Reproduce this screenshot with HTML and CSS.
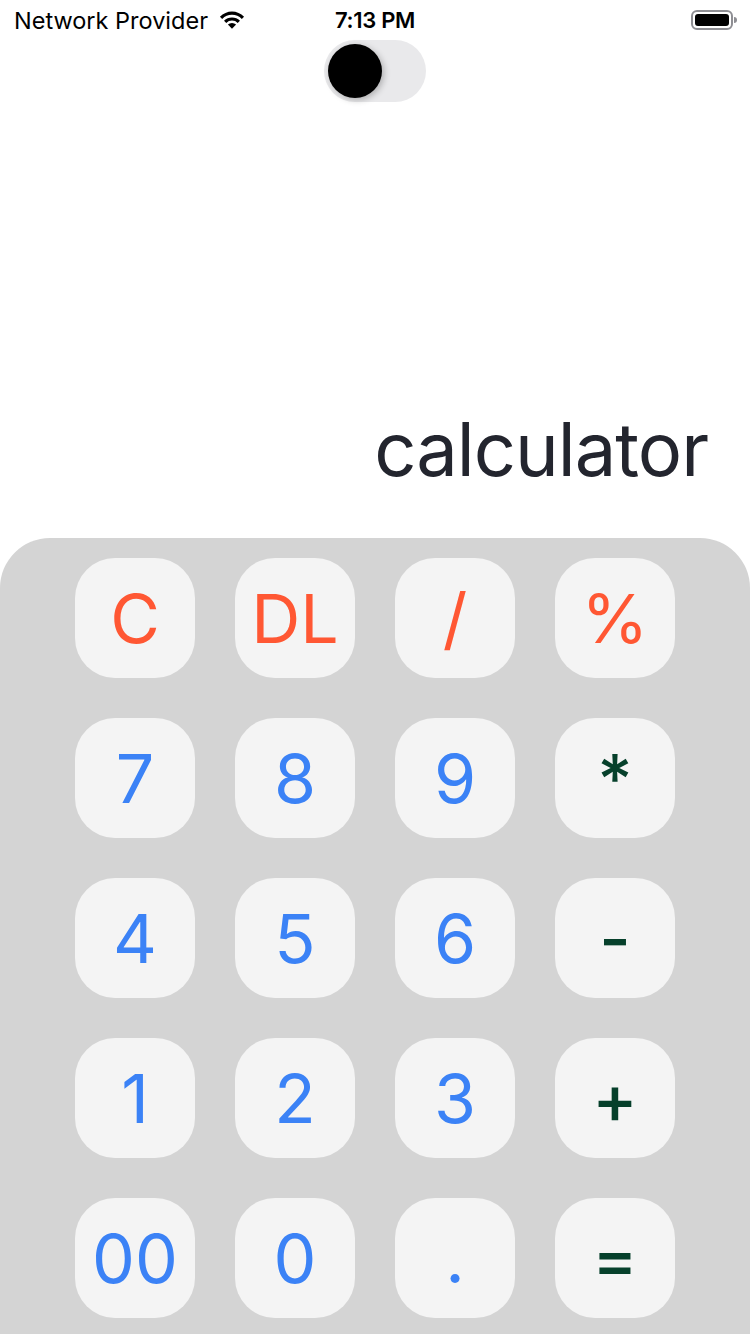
FILE: index.html
```html
<!DOCTYPE html>
<html>
<head>
<meta charset="utf-8">
<link rel="stylesheet" href="styles.css">
</head>
<body>
<div class="screen">
  <div class="status">
    <div class="status-left">
      <span class="carrier">Network Provider</span>
      <svg class="wifi" width="28" height="22" viewBox="0 0 26 20">
        <path d="M13 19 L9.2 15.2 A5.4 5.4 0 0 1 16.8 15.2 Z" fill="#000"/>
        <path d="M5.6 11.6 A10.5 10.5 0 0 1 20.4 11.6 L18.3 13.7 A7.5 7.5 0 0 0 7.7 13.7 Z" fill="#000"/>
        <path d="M1.8 7.8 A15.8 15.8 0 0 1 24.2 7.8 L22.1 9.9 A12.8 12.8 0 0 0 3.9 9.9 Z" fill="#000"/>
      </svg>
    </div>
    <div class="time">7:13 PM</div>
    <div class="status-right">
      <svg width="46" height="22" viewBox="0 0 46 22">
        <rect x="1" y="2" width="40" height="18" rx="5" fill="none" stroke="#8e8e93" stroke-width="2"/>
        <rect x="4" y="5" width="34" height="12" rx="3" fill="#000"/>
        <path d="M43 8 v6 a3 3 0 0 0 0 -6z" fill="#8e8e93"/>
      </svg>
    </div>
  </div>
  <div class="toggle-row">
    <div class="toggle"><div class="knob"></div></div>
  </div>
  <div class="display">
    <div class="result">calculator</div>
  </div>
  <div class="pad">
    <div class="grid">
      <button class="key op">C</button>
      <button class="key op">DL</button>
      <button class="key op">/</button>
      <button class="key op">%</button>
      <button class="key num">7</button>
      <button class="key num">8</button>
      <button class="key num">9</button>
      <button class="key ar">*</button>
      <button class="key num">4</button>
      <button class="key num">5</button>
      <button class="key num">6</button>
      <button class="key ar">-</button>
      <button class="key num">1</button>
      <button class="key num">2</button>
      <button class="key num">3</button>
      <button class="key ar">+</button>
      <button class="key num">00</button>
      <button class="key num">0</button>
      <button class="key num">.</button>
      <button class="key ar">=</button>
    </div>
  </div>
</div>
</body>
</html>
```
FILE: styles.css
```css
* { box-sizing: border-box; }
html, body { margin: 0; padding: 0; background: #fff; }
body { font-family: Inter, "Liberation Sans", sans-serif; }
.screen { width: 750px; height: 1334px; display: flex; flex-direction: column; overflow: hidden; }
.status { height: 40px; display: flex; align-items: center; justify-content: space-between; padding: 0 14px; position: relative; }
.status-left { display: flex; align-items: center; gap: 10px; }
.carrier { font-size: 23.5px; color: #000; letter-spacing: 0; }
.wifi { margin-top: -2px; }
.time { position: absolute; left: 0; right: 0; text-align: center; font-size: 22px; font-weight: 600; pointer-events: none; letter-spacing: -0.3px; }
.status-right { display: flex; align-items: center; margin-right: -1px; }
.toggle-row { display: flex; justify-content: center; padding-top: 0; }
.toggle { width: 102px; height: 62px; border-radius: 31px; background: #e9e9eb; padding: 4px; display: flex; align-items: center; }
.knob { width: 54px; height: 54px; border-radius: 50%; background: #000; box-shadow: 2px 2px 6px rgba(0,0,0,0.25); }
.display { flex: 0 0 436px; display: flex; align-items: flex-end; justify-content: flex-end; padding: 0 42px 52px 0; }
.result { font-size: 74px; color: #23252e; line-height: 1; letter-spacing: -1px; }
.pad { flex: 1; background: #d4d4d4; border-radius: 50px 50px 0 0; padding-top: 20px; }
.grid { display: grid; grid-template-columns: repeat(4, 120px); gap: 40px; justify-content: center; }
.key { width: 120px; height: 120px; border: none; border-radius: 40px; background: #f4f4f4; font-family: Inter, "Liberation Sans", sans-serif; font-size: 68px; line-height: 1; padding: 0; display: flex; align-items: center; justify-content: center; }
.op { color: #ff5733; }
.num { color: #3b82f6; }
.ar { color: #06402b; font-weight: 500; }
```
